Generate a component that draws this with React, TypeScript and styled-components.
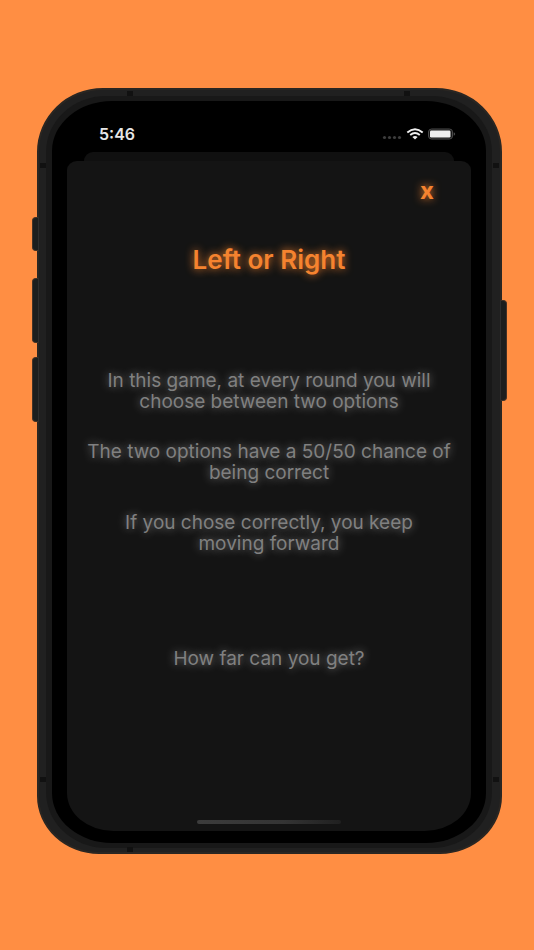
import React from "react";
import styled, { createGlobalStyle } from "styled-components";

const GlobalStyle = createGlobalStyle`
  *, *::before, *::after { box-sizing: border-box; }
  body {
    margin: 0;
    background: #ff8e43;
    font-family: Inter, "Liberation Sans", sans-serif;
  }
  h1, p { margin: 0; font-weight: inherit; }
`;

const Page = styled.div`
  display: flex;
  min-height: 100vh;
  padding: 88px 32px 96px 37px;
  background: #ff8e43;
`;

const Phone = styled.div`
  position: relative;
  display: flex;
  flex: 1;
  padding: 6px 8px 4px 7px;
  border: 2px solid #2a2622;
  border-radius: 66px 66px 62px 62px / 64px 64px 58px 58px;
  background: #202020;
`;

const Bezel = styled.div`
  display: flex;
  flex: 1;
  padding: 5px 6px;
  border-radius: 60px / 56px;
  background: #181818;
`;

const Screen = styled.div`
  display: flex;
  flex: 1;
  flex-direction: column;
  padding: 0 15px 12px;
  border-radius: 60px / 50px;
  background: #000;
`;

type Side = "left" | "right";

const SideKey = styled.span<{ $side: Side; $top: number; $height: number }>`
  position: absolute;
  ${(p) => p.$side}: -7px;
  top: ${(p) => p.$top}px;
  width: 7px;
  height: ${(p) => p.$height}px;
  border: 1px solid #443226;
  border-${(p) => (p.$side === "left" ? "right" : "left")}-color: #2e2e2e;
  border-radius: ${(p) => (p.$side === "left" ? "4px 0 0 4px" : "0 4px 4px 0")};
  background: #1c1e1e;
`;

const SideSeam = styled.span<{ $side: Side; $edge: "top" | "bottom" }>`
  position: absolute;
  ${(p) => p.$side}: 1px;
  ${(p) => p.$edge}: ${(p) => (p.$edge === "top" ? 73 : 70)}px;
  width: 6px;
  height: 5px;
  background: #111;
`;

const EndSeam = styled.span<{ $side: Side; $edge: "top" | "bottom" }>`
  position: absolute;
  ${(p) => p.$edge}: ${(p) => (p.$edge === "top" ? 1 : 0)}px;
  ${(p) => p.$side}: ${(p) => (p.$side === "left" ? 88 : 90)}px;
  width: 6px;
  height: 5px;
  background: #111;
`;

const StatusBar = styled.div`
  display: flex;
  align-items: center;
  justify-content: space-between;
  height: 51px;
  padding: 14px 15px 0 32px;
  color: #e6e6e6;
  font-size: 16px;
  font-weight: 600;
  line-height: 20px;
`;

const StatusIcons = styled.svg`
  width: 74px;
  height: 14px;
`;

const BackSheet = styled.div`
  height: 9px;
  margin: 0 17px;
  border-radius: 10px 10px 0 0;
  background: #101010;
`;

const Sheet = styled.main`
  display: flex;
  flex: 1;
  flex-direction: column;
  align-items: center;
  padding: 16px 12px 7px;
  border-radius: 10px 10px 46px 46px / 9px 9px 38px 38px;
  background: #141414;
  text-align: center;
`;

const CloseButton = styled.button`
  align-self: flex-end;
  width: 40px;
  height: 28px;
  margin-right: 12px;
  padding: 0;
  border: 0;
  background: none;
  color: #f5832f;
  font: 700 24px/24px Inter, sans-serif;
  text-shadow: 0 0 8px #f5832f;
  cursor: pointer;
`;

const Title = styled.h1`
  margin-top: 40px;
  color: #f5832f;
  font-size: 26px;
  font-weight: 600;
  line-height: 30px;
  text-shadow: 0 0 8px #f5832f;
`;

const Rules = styled.section`
  display: flex;
  flex-direction: column;
  gap: 29px;
  margin-top: 95px;
`;

const Copy = styled.p`
  color: #808080;
  font-size: 19px;
  line-height: 21px;
  text-shadow: 0 0 8px #808080;
`;

const Line = styled.span`
  display: block;
`;

const Question = styled(Copy)`
  margin-top: 94px;
`;

const HomeIndicator = styled.div`
  width: 144px;
  height: 4px;
  margin-top: auto;
  border-radius: 2px;
  background: linear-gradient(90deg, #3c3c3c, #343434 60%, #202020);
`;

const rules = [
  ["In this game, at every round you will", "choose between two options"],
  ["The two options have a 50/50 chance of", "being correct"],
  ["If you chose correctly, you keep", "moving forward"],
];

export default function App() {
  return (
    <>
      <GlobalStyle />
      <Page>
        <Phone>
          <SideKey $side="left" $top={127} $height={34} />
          <SideKey $side="left" $top={188} $height={65} />
          <SideKey $side="left" $top={267} $height={65} />
          <SideKey $side="right" $top={210} $height={101} />
          <SideSeam $side="left" $edge="top" />
          <SideSeam $side="right" $edge="top" />
          <SideSeam $side="left" $edge="bottom" />
          <SideSeam $side="right" $edge="bottom" />
          <Bezel>
            <Screen>
              <StatusBar>
                <span>5:46</span>
                <StatusIcons viewBox="0 0 74 14" aria-hidden="true">
                  <g fill="#3d3d3d">
                    <circle cx="2.5" cy="10.5" r="1.6" />
                    <circle cx="7.5" cy="10.5" r="1.6" />
                    <circle cx="12.5" cy="10.5" r="1.6" />
                    <circle cx="17.5" cy="10.5" r="1.6" />
                  </g>
                  <g fill="none" stroke="#f0f0f0" strokeWidth="1.9">
                    <path d="M25.3 5.6Q33 -0.9 40.7 5.6" />
                    <path d="M28.2 8Q33 4.2 37.8 8" />
                  </g>
                  <path d="M30.4 9.9Q33 7.9 35.6 9.9L33 12.4Z" fill="#f0f0f0" />
                  <rect x="46.5" y="2" width="24" height="10" rx="3" fill="#171717" stroke="#4a4a4a" />
                  <rect x="48" y="3.5" width="20.5" height="7" rx="1.2" fill="#eee" />
                  <path d="M71.7 5.2Q73.2 5.7 73.2 7Q73.2 8.3 71.7 8.8Z" fill="#4a4a4a" />
                </StatusIcons>
              </StatusBar>
              <BackSheet />
              <Sheet>
                <CloseButton type="button">x</CloseButton>
                <Title>Left or Right</Title>
                <Rules>
                  {rules.map((lines) => (
                    <Copy key={lines[0]}>
                      {lines.map((line) => (
                        <Line key={line}>{line} </Line>
                      ))}
                    </Copy>
                  ))}
                </Rules>
                <Question>How far can you get?</Question>
                <HomeIndicator />
              </Sheet>
            </Screen>
          </Bezel>
          <EndSeam $side="left" $edge="top" />
          <EndSeam $side="right" $edge="top" />
          <EndSeam $side="left" $edge="bottom" />
        </Phone>
      </Page>
    </>
  );
}
